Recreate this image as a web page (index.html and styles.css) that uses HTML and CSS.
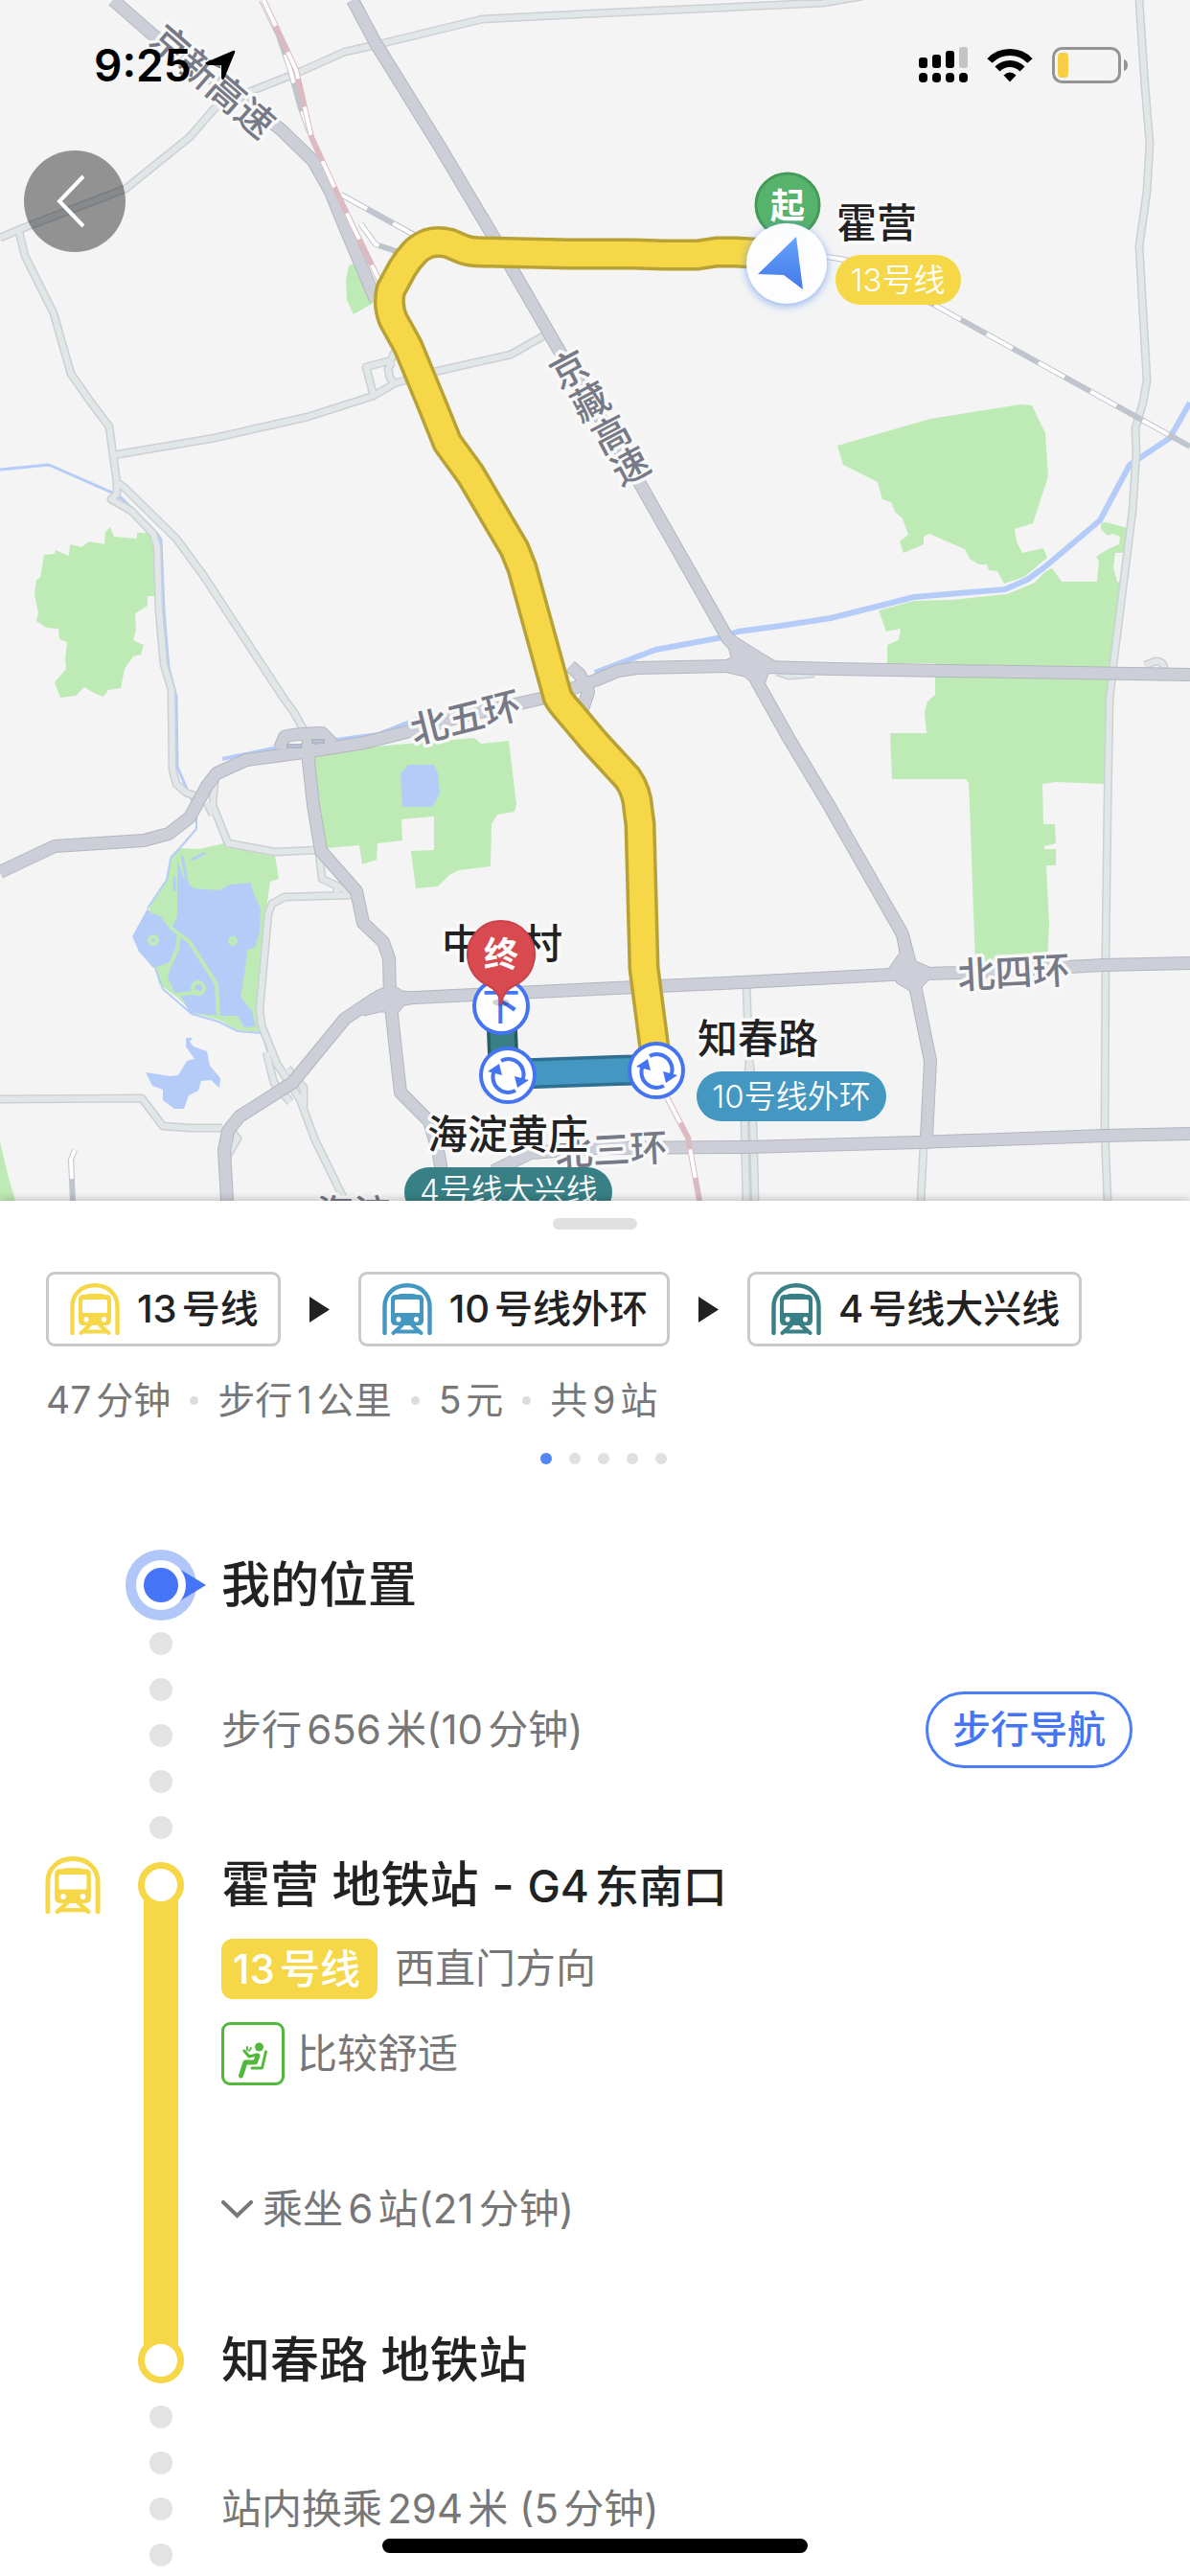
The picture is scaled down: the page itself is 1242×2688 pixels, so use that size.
FILE: index.html
```html
<!DOCTYPE html>
<html lang="zh-CN">
<head>
  <meta charset="UTF-8" />
  <meta name="viewport" content="width=device-width, initial-scale=1.0"/>
  <title>公交路线</title>
  <link rel="stylesheet" href="styles.css">
</head>
<body>
  <!-- shared icons -->
  <svg class="sprite" aria-hidden="true">
    <symbol id="train" viewBox="0 0 52 54">
      <path d="M2.5 52V24C2.5 11 12.5 2.3 26 2.3S49.5 11 49.5 24V52" fill="none" stroke="currentColor" stroke-width="4.4" stroke-linecap="round"/>
      <path fill="currentColor" fill-rule="evenodd" d="M16 12q2-1 4-1h12q2 0 4 1h2q5 0 5 5v22q0 5-5 5H14q-5 0-5-5V17q0-5 5-5zM15 17q-2 0-2 2v12h26V19q0-2-2-2zM17 35a2.5 2.8 0 1 0 0 5.600a2.500 2.800 0 1 0 0-5.600zM35.500 35a2.500 2.800 0 1 0 0 5.600a2.500 2.800 0 1 0 0-5.600z"/>
      <path d="M20.500 44L11.500 52M31.500 44L40.500 52M15 50.500H37" fill="none" stroke="currentColor" stroke-width="4" stroke-linecap="round"/>
    </symbol>
  </svg>

  <div class="app">
    <header class="map">
      <svg class="map-canvas" viewBox="0 0 1242 1253" role="img" aria-label="路线地图">
        <defs>
          <g id="minor">
            <path d="M900-4L859 3L621 14L503 20L392 47L360 54L313 75L257 97L224 113L198 143L131 197L24 238L0 248"/>
            <path d="M20 242L26 267L56 327L74 390L95 420L114 445L118 475L122 503L131 510L184 562L212 600L297 730L306 742L319 765"/>
            <path d="M122 503V515L116 521L137 533L160 557L164 570L166 637L171 693L179 720L180 803L184 818L194 827L208 832"/>
            <path d="M118 475L224 457L321 435L390 413L412 400L453 388L533 370L570 349"/>
            <path d="M390 413L382 383L408 376L412 367M412 400L407 394L405 385L409 378"/>
            <path d="M1189 0L1195 90L1200 150L1197 200L1189 257L1197 397L1193 420L1185 447L1186 473L1182 533L1162 693L1158 730L1156 840L1154 993L1153 1180L1156 1253"/>
            <path d="M779 1028L782 1107L777 1170L779 1253M783 1110L786 1173L788 1253"/>
            <path d="M0 1147L148 1146L170 1175L198 1177L232 1177"/>
            <path d="M224 815L222 840L238 880L287 889L331 887M216 838L222 850"/>
            <path d="M333 890L336 917L366 931M352 924V934"/>
            <path d="M368 934L297 936L284 943L280 953L271 1053L273 1070L289 1110L313 1147L329 1190L360 1253"/>
            <path d="M278 1098L286 1130L303 1150M300 1115L317 1135V1155M240 1178L248 1188L238 1205"/>
            <path d="M1195 694L1206 690Q1216 690 1215 700M811 701L823 705L850 703"/>
            <path d="M964 1195L961 1253"/>
          </g>
          <g id="major">
            <path d="M118 0L158 35L293 135L327 168L345 200L360 237L392 313"/>
            <path d="M368 0L392 45L459 153L515 247L582 363L667 503L760 667L779 687L791 713L823 770L865 840L942 975L950 1013L956 1033L971 1107L967 1187"/>
            <path d="M0 910L57 883L150 877L176 870L198 853L216 820L226 807L257 793L317 785L380 775L420 765L483 747L574 727L621 710L645 700L665 697L760 695L870 698L1242 704"/>
            <path d="M292 781L297 769Q302 766 336 765L347 776"/>
            <path d="M322 770L321 785L327 840L335 888L372 930L379 963L400 983L406 1000L407 1040L412 1087L418 1140L448 1170L457 1200L461 1222"/>
            <path d="M1242 1005L1152 1007L1001 1015L930 1017L775 1025L621 1032L412 1042L390 1043L360 1063L305 1130L250 1165L238 1180L234 1200L237 1253"/>
            <path d="M515 1222L554 1203L621 1198L779 1197L958 1192L1152 1185L1242 1183"/>
            <path d="M595 695L605 704L614 722L608 740"/>
          </g>
          <g id="rail-path">
            <path d="M356 203L432 245M376 233L392 255L416 263M863 268L882 271L973 317L1242 466"/>
            <path d="M273 0L291 37L303 73L313 110L323 138M78 1200L74 1210L76 1253"/>
          </g>
          <g id="metro-path">
            <path d="M275 0L309 73L325 143L352 202L396 293M696 1145L718 1187L730 1253"/>
          </g>
          <path id="line13" d="M801 265L768 263L748 263L728 266L692 266L661 265L594 265L503 263Q491 263 483 260L469 254Q457 251 447 254Q438 258 434 262Q426 270 420 280L408 302Q404 317 410 333L426 362L450 420L467 462L491 495L537 573L545 593L582 727Q585 733 594 743L621 775L655 812Q665 826 666 845L668 860L672 1010L686 1117"/>
          <path id="line10" d="M685 1116L643 1117L530 1121"/>
          <path id="line4" d="M523 1050L525 1100L530 1121"/>
          <g id="transfer">
            <circle r="28" fill="#fff" stroke="#4574f3" stroke-width="4"/>
            <path d="M-7-15A16 16 0 0 1 15 6M8 16A16 16 0 0 1-14-5" fill="none" stroke="#4574f3" stroke-width="4"/>
            <path d="M-21-4L-9-12L-6 0ZM22 5L10 13L7 1Z" fill="#4574f3"/>
          </g>
          <linearGradient id="arrow-fill" x1="0" y1="0" x2="0" y2="1">
            <stop offset="0" stop-color="#64a5fa"/>
            <stop offset="1" stop-color="#4478ea"/>
          </linearGradient>
          <filter id="glow" x="-50%" y="-50%" width="200%" height="200%">
            <feDropShadow dx="0" dy="2" stdDeviation="5" flood-color="#4d86f0" flood-opacity=".7"/>
          </filter>
        </defs>

        <!-- parks -->
        <g fill="#beeab6">
          <path d="M115 550L119 560L143 562V556H156L162 567L163 622H154V632L141 640L142 657L139 668L150 673L147 683L139 685L130 698L126 718L113 720L108 727L98 723L88 717L79 726L63 728L57 712L69 698L68 688L70 670L62 667L61 656L48 655L38 648L40 640L36 620L38 605L42 603L46 579L57 578L58 574L72 580L73 568L85 571L93 565L109 568L110 555Z"/>
          <path d="M364 277L371 275L390 316L369 328L362 313L361 292Z"/>
          <path d="M328 789L380 780L495 770L502 776L531 773L539 840L537 847L519 850L513 860L512 904L479 908L469 913L457 925L434 927L429 888L453 887V852L419 855L420 877L394 880L393 897L378 902L375 882L341 885L334 840Z"/>
          <path d="M874 465L971 437L1065 422L1077 423L1091 452L1094 497L1078 546L1059 552L1061 565L1067 577L1089 572L1093 582L1069 602L1048 609L1041 596L1032 595L1030 589L1022 589L1012 583L1007 573L970 557L964 560V568L943 577L939 565L948 558L942 541L934 534L930 524L921 521L916 503L880 485Z"/>
          <path d="M917 637L954 627L993 626L1051 620L1080 608L1090 597L1098 593L1108 607H1145L1147 585L1144 581Q1156 572 1168 568L1169 560Q1160 555 1156 559L1149 552Q1148 544 1154 545L1177 551L1173 577H1164L1162 592L1166 607L1170 608L1162 697L1153 818L1102 816L1088 818L1089 860H1101L1102 880L1090 883V886H1102V903H1092L1095 963L1093 1007H1018L1012 840L1011 817L1008 813H931L929 765H967L965 743L968 732L976 725V692H926V673L938 668L940 656L925 659Z"/>
          <path d="M186 885L208 886L234 880L242 884L287 893L291 917L282 920L277 955L271 1053L273 1077L248 1075L228 1064L204 1058L184 1040L166 1027L162 1010L156 947L174 918L178 893Z"/>
          <path d="M0 1192L8 1225L16 1253H0Z"/>
        </g>

        <!-- water -->
        <g fill="#b5ccf9">
          <path d="M426 798H453L457 807L459 828L451 842H420L418 807Z"/>
          <path d="M185 897L192 917L202 927L228 929L240 923L261 921L266 935L272 947L271 973L266 989L258 991L255 1017L251 1040L263 1055L267 1071L255 1072L248 1060L230 1060L198 1057L189 1040L182 1035L175 1020L180 1003L160 1010L145 993L138 977L154 948L158 953L166 955L178 970L185 957Z"/>
          <path d="M194 1083H201L198 1087L202 1092L216 1097L219 1112L230 1125L229 1135L220 1127L210 1128L207 1138L197 1143L192 1157H182L170 1148V1137L159 1133L152 1119L178 1123L186 1122L195 1107L203 1105L194 1092Z"/>
        </g>
        <g fill="none" stroke="#b5ccf9" stroke-linejoin="round">
          <path d="M0 490L51 485L117 514L127 520L164 557L168 563L171 637L176 697L184 727L185 800L200 835" stroke-width="3"/>
          <path d="M1242 420L1221 457L1179 485L1148 543L1090 592L1072 605L1049 615L954 623L867 645L815 653L770 659L754 665L684 678L621 702" stroke-width="6"/>
          <path d="M232 792L290 780M350 772L395 766L440 748L490 740" stroke-width="4"/>
          <path d="M205 850V865L178 896L174 918L154 948M162 1010L170 1032L200 1058L228 1066L248 1076L273 1078L280 1100" stroke-width="2"/>
          <path d="M282 1102L298 1128M318 1160L330 1190" stroke-width="3"/>
          <path d="M200 897L214 890M190 893L196 925M182 915V930" stroke-width="3"/>
        </g>
        <g fill="none" stroke="#beeab6" stroke-width="4">
          <path d="M178 968L198 983L226 1027L228 1062M187 975L185 990L178 1006M184 1038L208 1035"/>
          <circle cx="160" cy="981" r="4"/>
          <circle cx="243" cy="982" r="3"/>
          <circle cx="207" cy="1031" r="6"/>
        </g>

        <!-- roads: casing first, then fill -->
        <use href="#minor" class="road minor-casing"/>
        <use href="#minor" class="road minor-fill"/>
        <use href="#major" class="road major-casing"/>
        <g fill="#cccfd8" stroke="#b3b6be" stroke-width="1">
          <path d="M755 655L769 665L796 682L813 692V700L802 703L798 714H786L777 706L755 701V690L763 686Z"/>
          <path d="M368 1052L392 1034L402 1030H414L420 1034L440 1036V1046L422 1049L416 1056H402L396 1056L380 1060Z"/>
          <path d="M936 975L948 973L956 1003L970 1009V1022L962 1030L950 1034L936 1026L928 1010L939 994Z"/>
        </g>
        <use href="#major" class="road major-fill"/>
        <g stroke="#b3b6be" stroke-width="2" fill="#b5ccf9">
          <rect x="300" y="777" width="14" height="3"/>
          <rect x="326" y="772" width="12" height="3"/>
        </g>

        <!-- railways -->
        <use href="#rail-path" class="road rail-casing"/>
        <use href="#rail-path" class="road rail-fill"/>
        <use href="#metro-path" class="road metro-casing"/>
        <use href="#metro-path" class="road metro-fill"/>

        <!-- road names -->
        <g class="road-name">
          <text x="222" y="99" transform="rotate(41 222 85)">京新高速</text>
          <text x="603 625 647 667" y="407 441 475 508" rotate="-28">京藏高速</text>
          <text x="486" y="763" transform="rotate(-14 486 749)">北五环</text>
          <text x="1058" y="1029" transform="rotate(-3 1058 1015)">北四环</text>
          <text x="638" y="1214" transform="rotate(-3 638 1200)">北三环</text>
          <text x="369" y="1280">海淀</text>
        </g>

        <!-- route -->
        <g class="route">
          <use href="#line4" stroke="#295f64" stroke-width="32"/>
          <use href="#line4" stroke="#388085" stroke-width="25"/>
          <use href="#line10" stroke="#2f6f92" stroke-width="32"/>
          <use href="#line10" stroke="#4497c1" stroke-width="25"/>
          <use href="#line13" stroke="#b8a235" stroke-width="33"/>
          <use href="#line13" stroke="#f5d748" stroke-width="26"/>
        </g>

        <g class="station-name">
          <text x="873" y="248">霍营</text>
          <text x="728" y="1099">知春路</text>
          <text x="461" y="1000">中关村</text>
          <text x="446" y="1199">海淀黄庄</text>
        </g>
        <g class="line-pill">
          <rect x="872" y="266" width="131" height="52" rx="26" fill="#f5d748"/>
          <text x="937" y="304">13号线</text>
          <rect x="727" y="1118" width="198" height="52" rx="26" fill="#4497c1"/>
          <text x="826" y="1156">10号线外环</text>
          <rect x="422" y="1218" width="217" height="52" rx="26" fill="#388085"/>
          <text x="531" y="1254">4号线大兴线</text>
        </g>

        <use href="#transfer" x="530" y="1122"/>
        <use href="#transfer" x="685" y="1117"/>
        <circle cx="523" cy="1050" r="28" fill="#fff" stroke="#4574f3" stroke-width="4"/>
        <text class="exit-mark" x="523" y="1064">下</text>
        <ellipse cx="523" cy="1046" rx="9" ry="4" fill="#000" opacity=".18"/>

        <path d="M523 1048C521 1035 515 1031 505 1026A35 35 0 1 1 541 1026C531 1031 525 1035 523 1048Z" fill="#d84a50" stroke="#c94248" stroke-width="2"/>
        <text class="pin-text" x="523" y="1009">终</text>

        <circle cx="822" cy="214" r="33" fill="#57b26b" stroke="#459a58" stroke-width="3"/>
        <text class="pin-text" x="822" y="228">起</text>
        <circle cx="821" cy="275" r="42" fill="#fff" fill-opacity=".97" filter="url(#glow)"/>
        <path d="M831 247L791 286L818 287L838 302Z" fill="url(#arrow-fill)"/>
      </svg>

      <div class="status-bar">
        <div class="clock">
          <span>9:25</span>
          <svg width="32" height="32" viewBox="0 0 32 32"><path d="M1 13L29 1Q32 0 31 3L20 30Q18 33 17 29V16H4Q-1 15 1 13Z"/></svg>
        </div>
        <div class="indicators">
          <svg width="51" height="38" viewBox="0 0 51 38">
            <rect x="0" y="11" width="9" height="11" rx="3"/>
            <rect x="14" y="8" width="9" height="14" rx="3"/>
            <rect x="28" y="4" width="9" height="18" rx="3"/>
            <rect x="42" y="0" width="9" height="22" rx="3" fill="#c4c4c4"/>
            <rect x="0" y="27" width="9" height="10" rx="4"/>
            <rect x="14" y="27" width="9" height="10" rx="4"/>
            <rect x="28" y="27" width="9" height="10" rx="4"/>
            <rect x="42" y="27" width="9" height="10" rx="4"/>
          </svg>
          <svg width="48" height="36" viewBox="0 0 48 36">
            <g fill="none" stroke="#000" stroke-width="7">
              <path d="M3 13.500C14 1.500 34 1.500 45 13.500"/>
              <path d="M11 22C18 14.500 30 14.500 37 22"/>
            </g>
            <path d="M17.500 28.500Q24 22.500 30.500 28.500L24 35.500Z"/>
          </svg>
          <svg width="80" height="38" viewBox="0 0 80 38">
            <rect x="1.500" y="1.500" width="69" height="35" rx="9" fill="none" stroke="#949494" stroke-width="3"/>
            <rect x="6" y="6" width="11" height="26" rx="4" fill="#f8ce46"/>
            <path d="M75 13Q79 14 79 19T75 25Z" fill="#949494"/>
          </svg>
        </div>
      </div>

      <button class="back" type="button" aria-label="返回">
        <svg width="30" height="56" viewBox="0 0 30 56"><path d="M28 2L3 28L28 54" fill="none" stroke="#fff" stroke-width="4"/></svg>
      </button>
    </header>

    <main class="sheet">
      <div class="handle"></div>

      <div class="lines">
        <div class="chip"><svg class="icon line-13"><use href="#train"/></svg>13号线</div>
        <svg class="next" viewBox="0 0 21 27"><path d="M0 0L21 13.500L0 27Z"/></svg>
        <div class="chip"><svg class="icon line-10"><use href="#train"/></svg>10号线外环</div>
        <svg class="next" viewBox="0 0 21 27"><path d="M0 0L21 13.500L0 27Z"/></svg>
        <div class="chip"><svg class="icon line-4"><use href="#train"/></svg>4号线大兴线</div>
      </div>

      <div class="summary">
        <span>47分钟</span><i></i><span>步行1公里</span><i></i><span>5元</span><i></i><span>共9站</span>
      </div>

      <div class="pages">
        <i class="current"></i><i></i><i></i><i></i><i></i>
      </div>

      <div class="timeline">
        <section class="step">
          <div class="rail">
            <svg class="here" width="86" height="74" viewBox="0 0 86 74">
              <circle cx="37" cy="37" r="37" fill="#b1c7fa"/>
              <path d="M56 20L84 37L56 54Z" fill="#4575f6"/>
              <circle cx="37" cy="37" r="26" fill="#fff"/>
              <circle cx="37" cy="37" r="18" fill="#4575f6"/>
            </svg>
          </div>
          <div class="content center"><h2>我的位置</h2></div>
        </section>

        <section class="step walk">
          <div class="rail dots"><i></i><i></i><i></i><i></i><i></i></div>
          <div class="content center">
            <p>步行656米(10分钟)</p>
            <button class="navigate" type="button">步行导航</button>
          </div>
        </section>

        <section class="step">
          <svg class="icon big line-13"><use href="#train"/></svg>
          <div class="rail ride"><b></b><b></b></div>
          <div class="content">
            <h2>霍营 地铁站 - <small>G4东南口</small></h2>
            <div class="direction"><span class="badge">13号线</span>西直门方向</div>
            <div class="comfort">
              <span class="seat">
                <svg width="30" height="40" viewBox="0 0 30 40" fill="none" stroke="#52b83c" stroke-linecap="round" stroke-linejoin="round">
                  <circle cx="21.500" cy="7" r="4.500" fill="#52b83c" stroke="none"/>
                  <path d="M28.500 12L24.500 29H14" stroke-width="3"/>
                  <path d="M20 16L17.500 23H7L2.500 37" stroke-width="5"/>
                  <path d="M6 11L11 17L19 15" stroke-width="3"/>
                  <path d="M9 7V10M13 8L11 11" stroke-width="2"/>
                </svg>
              </span>比较舒适
            </div>
            <button class="toggle" type="button">
              <svg width="33" height="19" viewBox="0 0 33 19"><path d="M2 2L16.500 16L31 2" fill="none" stroke="#777" stroke-width="4" stroke-linecap="round"/></svg>
              乘坐6站(21分钟)
            </button>
            <h2>知春路 地铁站</h2>
          </div>
        </section>

        <section class="step change">
          <div class="rail dots"><i></i><i></i><i></i><i></i><i></i></div>
          <div class="content center"><p>站内换乘294米 (5分钟)</p></div>
        </section>
      </div>
    </main>

    <div class="home-bar"></div>
  </div>
</body>
</html>
```
FILE: styles.css
```css
* {
  box-sizing: border-box;
}

body {
  margin: 0;
  background: #fff;
  color: #222;
  font-family: Inter, "Noto Sans CJK SC", sans-serif;
  font-weight: 500;
  line-height: 1.4;
  text-autospace: normal;
}

h2, p {
  margin: 0;
}

button {
  font: inherit;
  background: none;
  border: none;
  padding: 0;
  cursor: pointer;
}

svg {
  display: block;
}

.sprite {
  position: absolute;
  width: 0;
  height: 0;
}

.app {
  display: flex;
  flex-direction: column;
  height: 100vh;
  overflow: hidden;
}

/* map */
.map {
  position: relative;
  flex: none;
  background: #f4f4f4;
}

.map-canvas {
  width: 100%;
  text-autospace: no-autospace;
}

.road {
  fill: none;
  stroke-linejoin: round;
}

.minor-casing { stroke: #ccd0d3; stroke-width: 9px; }
.minor-fill { stroke: #e1e6e9; stroke-width: 6px; }
.major-casing { stroke: #b3b6be; stroke-width: 14px; }
.major-fill { stroke: #cccfd8; stroke-width: 12px; }
.rail-casing { stroke: #bfc4cd; stroke-width: 6px; }
.rail-fill { stroke: #fff; stroke-width: 4px; stroke-dasharray: 31 31; }
.metro-casing { stroke: #dcbac1; stroke-width: 6px; }
.metro-fill { stroke: #fff; stroke-width: 4px; stroke-dasharray: 30 30; }

.route {
  fill: none;
  stroke-linejoin: round;
}

.road-name {
  font-size: 39px;
  fill: #777a86;
  stroke: #f8f8f8;
  stroke-width: 7px;
  stroke-linejoin: round;
  paint-order: stroke;
  text-anchor: middle;
}

.station-name {
  font-size: 42px;
  fill: #222;
  stroke: #fafafa;
  stroke-width: 7px;
  stroke-linejoin: round;
  paint-order: stroke;
}

.line-pill {
  font-size: 33px;
  font-weight: 350;
}

.line-pill text {
  fill: #fff;
  text-anchor: middle;
}

.exit-mark {
  font-size: 39px;
  fill: #4574f3;
  text-anchor: middle;
}

.pin-text {
  font-size: 36px;
  font-weight: 600;
  fill: #fff;
  text-anchor: middle;
}

.status-bar {
  position: absolute;
  top: 38px;
  left: 0;
  right: 0;
  display: flex;
  justify-content: space-between;
  align-items: center;
  height: 60px;
  padding: 0 64px 0 98px;
}

.clock {
  display: flex;
  align-items: center;
  gap: 14px;
  color: #000;
  font-size: 46px;
  font-weight: 600;
}

.indicators {
  display: flex;
  align-items: center;
  gap: 20px;
}

.back {
  position: absolute;
  top: 157px;
  left: 25px;
  display: flex;
  align-items: center;
  width: 106px;
  height: 106px;
  padding-left: 34px;
  border-radius: 50%;
  background: rgba(0, 0, 0, 0.4);
}

/* bottom sheet */
.sheet {
  position: relative;
  flex: 1;
  padding-top: 18px;
  background: #fff;
  box-shadow: 0 -2px 8px rgba(0, 0, 0, 0.2);
  overflow-y: auto;
  scrollbar-width: none;
}

.handle {
  width: 88px;
  height: 12px;
  margin: 0 auto 44px;
  border-radius: 6px;
  background: #e0e0e0;
}

.lines {
  display: flex;
  align-items: center;
  gap: 30px;
  padding: 0 48px;
}

.chip {
  display: flex;
  align-items: center;
  gap: 18px;
  height: 78px;
  padding: 0 20px 0 22px;
  border: 3px solid #cacaca;
  border-radius: 9px;
  font-size: 40px;
  white-space: nowrap;
}

.icon {
  flex: none;
  width: 52px;
  height: 54px;
}

.icon.big {
  width: 58px;
  height: 60px;
}

.line-13 { color: #f5d748; }
.line-10 { color: #4497c1; }
.line-4 { color: #388085; }

.next {
  flex: none;
  width: 21px;
  height: 27px;
  fill: #222;
}

.summary {
  display: flex;
  align-items: center;
  gap: 20px;
  margin-top: 28px;
  padding: 0 48px;
  color: #777;
  font-size: 39px;
  font-weight: 400;
  line-height: 56px;
}

.summary i {
  width: 9px;
  height: 9px;
  border-radius: 50%;
  background: #ddd;
}

.pages {
  display: flex;
  justify-content: center;
  gap: 18px;
  margin: 27px 0 89px;
  padding-left: 18px;
}

.pages i {
  width: 12px;
  height: 12px;
  border-radius: 50%;
  background: #e0e0e0;
}

.pages .current {
  background: #5285f6;
}

/* steps */
.timeline {
  padding: 0 60px 0 47px;
}

.step {
  display: grid;
  grid-template-columns: 58px 74px 1fr;
  column-gap: 26px;
  color: #777;
  font-size: 42px;
  font-weight: 400;
}

.icon.big {
  grid-column: 1;
  margin-top: -6px;
}

.rail {
  grid-column: 2;
}

.content {
  grid-column: 3;
}

.center {
  display: flex;
  align-items: center;
  justify-content: space-between;
}

.dots {
  display: flex;
  flex-direction: column;
  align-items: center;
  gap: 24px;
}

.dots i {
  width: 24px;
  height: 24px;
  border-radius: 50%;
  background: #e3e3e3;
}

.walk {
  padding-bottom: 24px;
}

.walk .dots {
  padding-top: 12px;
}

.change {
  padding-top: 23px;
}

.navigate {
  height: 80px;
  padding: 0 25px;
  border: 3px solid #4a7df6;
  border-radius: 40px;
  color: #4575f6;
  font-size: 40px;
  font-weight: 500;
}

h2 {
  color: #222;
  font-size: 51px;
  font-weight: 500;
  line-height: 48px;
}

h2 small {
  font-size: 46px;
}

.ride {
  display: flex;
  flex-direction: column;
  align-items: center;
  justify-content: space-between;
  background: linear-gradient(#f5d748, #f5d748) center / 36px calc(100% - 48px) no-repeat;
}

.ride b {
  width: 48px;
  height: 48px;
  border: 7px solid #f5d748;
  border-radius: 50%;
  background: #fff;
}

.direction {
  display: flex;
  align-items: center;
  gap: 18px;
  margin: 31px 0 24px;
}

.badge {
  padding: 0 18px 0 12px;
  border-radius: 12px;
  background: #f5d748;
  color: #fff;
  font-weight: 500;
  line-height: 63px;
}

.comfort {
  display: flex;
  align-items: center;
  gap: 13px;
}

.seat {
  display: flex;
  align-items: flex-end;
  justify-content: center;
  width: 66px;
  height: 66px;
  padding-bottom: 4px;
  border: 3px solid #52b83c;
  border-radius: 9px;
}

.toggle {
  display: flex;
  align-items: center;
  gap: 10px;
  height: 48px;
  margin: 105px 0 110px;
  color: #777;
}

.home-bar {
  position: fixed;
  bottom: 24px;
  left: 50%;
  width: 444px;
  height: 15px;
  border-radius: 8px;
  background: #000;
  transform: translateX(-50%);
}
```
